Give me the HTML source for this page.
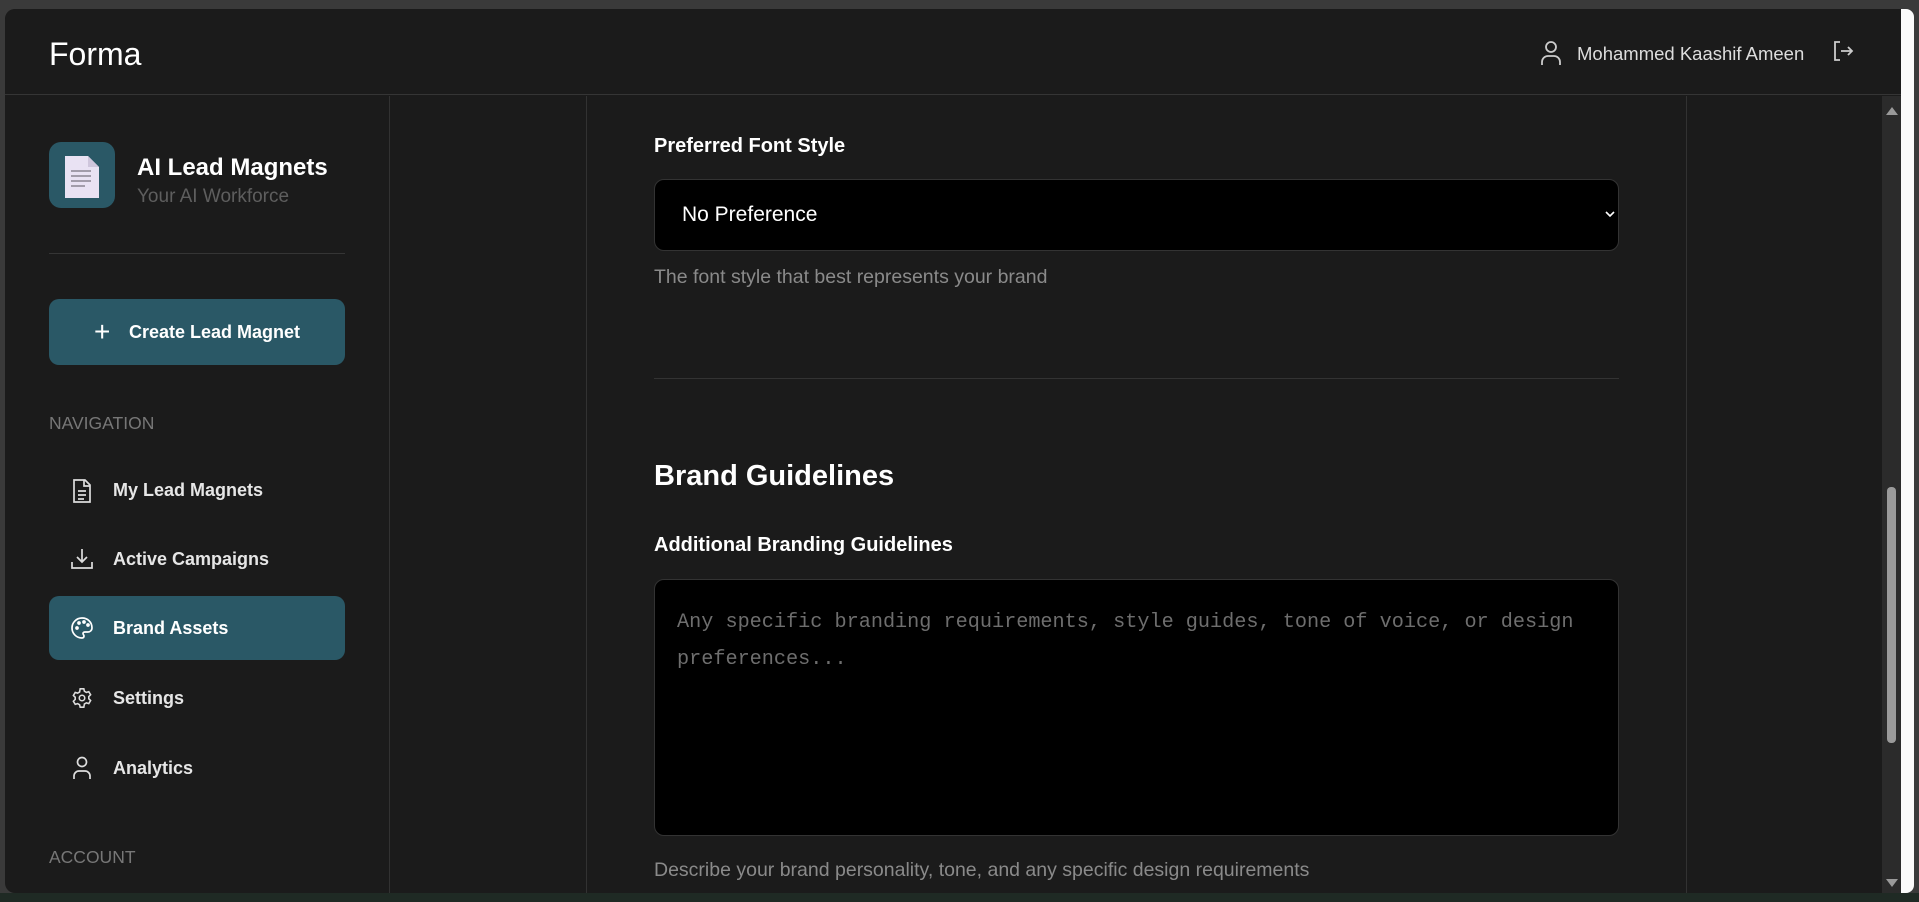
<!DOCTYPE html>
<html><head><meta charset="utf-8"><style>
*{box-sizing:border-box;margin:0;padding:0}
body{width:1919px;height:902px;background:#3a3a3a;overflow:hidden;font-family:"Liberation Sans",sans-serif;position:relative}
.win{position:absolute;left:5px;top:9px;width:1896px;height:884px;background:#1b1b1b;border-radius:10px 0 0 10px;overflow:hidden}
.white{position:absolute;left:1901px;top:9px;width:13px;height:884px;background:#fafafa;border-radius:0 8px 8px 0}
.green{position:absolute;left:0;top:893px;width:1919px;height:9px;background:#1f2a24}
.hdr{position:absolute;left:0;top:0;width:1896px;height:86px;border-bottom:1px solid #353535;background:#1b1b1b}
.t{position:absolute;white-space:nowrap}
.vl{position:absolute;top:87px;width:1px;height:800px;background:#323232}
.sb{position:absolute;left:1877px;top:87px;width:19px;height:800px;background:#2b2b2b}
.thumb{position:absolute;left:1882px;top:478px;width:9px;height:256px;background:#9a9a9a;border-radius:4px}
.nav{position:absolute;left:44px;width:296px;height:64px;border-radius:10px}
.navt{position:absolute;left:108px;font-size:18px;font-weight:bold;color:#e6e6e6;white-space:nowrap}
.ic{position:absolute;left:66px}
</style></head><body>
<div class="win">
 <div class="hdr">
  <div class="t" style="left:44px;top:27px;font-size:32px;color:#fff">Forma</div>
  <svg class="t" style="left:1534px;top:31px" width="24" height="26" viewBox="0 0 24 26" fill="none" stroke="#ccc" stroke-width="1.8"><circle cx="12" cy="7" r="5"/><path d="M3 25v-3a6 6 0 0 1 6-6h6a6 6 0 0 1 6 6v3"/></svg>
  <div class="t" style="left:1572px;top:34px;font-size:18.5px;color:#ddd">Mohammed Kaashif Ameen</div>
  <svg class="t" style="left:1826px;top:30px" width="24" height="24" viewBox="0 0 24 24" fill="none" stroke="#ccc" stroke-width="1.8"><path d="M9 3H4v18h5M10 12h11M17 8l4 4-4 4"/></svg>
 </div>
 <div class="vl" style="left:384px"></div>
 <div class="vl" style="left:581px"></div>
 <div class="vl" style="left:1681px"></div>
 <div class="sb"></div>
 <svg class="t" style="left:1881px;top:96px" width="12" height="10"><path d="M0 10L6 2 12 10z" fill="#9a9a9a"/></svg>
 <svg class="t" style="left:1881px;top:870px" width="12" height="10"><path d="M0 0L6 8 12 0z" fill="#9a9a9a"/></svg>
 <div class="thumb"></div>

 <div class="t" style="left:44px;top:133px;width:66px;height:66px;background:#2a5866;border-radius:12px">
  <svg style="position:absolute;left:15px;top:13px" width="36" height="44" viewBox="0 0 36 44"><path d="M1 1h23l11 11v31H1z" fill="#e9e2f3"/><path d="M24 1v11h11" fill="#cfc6dc"/><path d="M7 16h20M7 21h20M7 26h20M7 31h14" stroke="#8a8591" stroke-width="1.5"/></svg>
 </div>
 <div class="t" style="left:132px;top:145px;font-size:24px;font-weight:bold;color:#fff">AI Lead Magnets</div>
 <div class="t" style="left:132px;top:177px;font-size:19px;color:#5e5e5e">Your AI Workforce</div>
 <div class="t" style="left:44px;top:244px;width:296px;height:1px;background:#353535"></div>
 <div class="t" style="left:44px;top:290px;width:296px;height:66px;background:#2a5866;border-radius:10px"></div>
 <div class="t" style="left:89px;top:307px;font-size:28px;color:#fff;font-weight:300">+</div>
 <div class="t" style="left:124px;top:313px;font-size:18px;font-weight:bold;color:#fff">Create Lead Magnet</div>
 <div class="t" style="left:44px;top:404px;font-size:17.5px;color:#777">NAVIGATION</div>

 <div class="nav" style="top:587px;background:#2a5866"></div>
 <svg class="ic" style="top:470px" width="22" height="24" viewBox="0 0 22 24" fill="none" stroke="#ddd" stroke-width="1.7"><path d="M3 1h11l5 5v17H3z"/><path d="M13 1v6h6M7 12h8M7 16h8M7 20h6"/></svg>
 <div class="navt" style="top:471px">My Lead Magnets</div>
 <svg class="ic" style="top:539px" width="22" height="22" viewBox="0 0 22 22" fill="none" stroke="#ddd" stroke-width="1.7"><path d="M1 14v6h20v-6M11 1v13M6 9l5 5 5-5"/></svg>
 <div class="navt" style="top:540px">Active Campaigns</div>
 <svg class="ic" style="top:608px" width="22" height="22" viewBox="0 0 22 22" fill="none" stroke="#fff" stroke-width="1.7"><path d="M11 1a10 10 0 1 0 0 20c1.5 0 2-1 2-2s-1-1.5-1-2.5 1-1.5 2-1.5h3a4 4 0 0 0 4-4C21 5 16.5 1 11 1z"/><circle cx="6" cy="11" r="1" fill="#fff"/><circle cx="8" cy="6" r="1" fill="#fff"/><circle cx="13" cy="5" r="1" fill="#fff"/><circle cx="17" cy="8" r="1" fill="#fff"/></svg>
 <div class="navt" style="top:609px;color:#fff">Brand Assets</div>
 <svg class="ic" style="top:678px" width="22" height="22" viewBox="0 0 24 24" fill="none" stroke="#ddd" stroke-width="1.7"><circle cx="12" cy="12" r="3"/><path d="M10 2h4l.6 2.6 2.2 1.3 2.6-.8 2 3.4-2 1.9v2.4l2 1.9-2 3.4-2.6-.8-2.2 1.3L14 22h-4l-.6-2.6-2.2-1.3-2.6.8-2-3.4 2-1.9V11.2l-2-1.9 2-3.4 2.6.8 2.2-1.3z"/></svg>
 <div class="navt" style="top:679px">Settings</div>
 <svg class="ic" style="top:747px" width="22" height="24" viewBox="0 0 22 24" fill="none" stroke="#ddd" stroke-width="1.7"><circle cx="11" cy="6" r="4.5"/><path d="M3 23v-3a5 5 0 0 1 5-5h6a5 5 0 0 1 5 5v3"/></svg>
 <div class="navt" style="top:749px">Analytics</div>
 <div class="t" style="left:44px;top:838px;font-size:17.5px;color:#777">ACCOUNT</div>

 <div class="t" style="left:649px;top:126px;font-size:20px;font-weight:bold;color:#fff">Preferred Font Style</div>
 <div class="t" style="left:649px;top:170px;width:965px;height:72px;background:#000;border:1px solid #333;border-radius:10px"></div>
 <div class="t" style="left:677px;top:194px;font-size:21px;color:#fff">No Preference</div>
 <svg class="t" style="left:1600px;top:202px" width="10" height="8"><path d="M1 1l4 4 4-4" fill="none" stroke="#fff" stroke-width="1.6"/></svg>
 <div class="t" style="left:649px;top:257px;font-size:19.5px;color:#8a8a8a">The font style that best represents your brand</div>
 <div class="t" style="left:649px;top:369px;width:965px;height:1px;background:#333"></div>
 <div class="t" style="left:649px;top:451px;font-size:29px;font-weight:bold;color:#fff">Brand Guidelines</div>
 <div class="t" style="left:649px;top:525px;font-size:20px;font-weight:bold;color:#fff">Additional Branding Guidelines</div>
 <div class="t" style="left:649px;top:570px;width:965px;height:257px;background:#000;border:1px solid #333;border-radius:10px"></div>
 <div class="t" style="left:672px;top:595px;font-family:'Liberation Mono',monospace;font-size:20.2px;line-height:37px;color:#6e6e6e">Any specific branding requirements, style guides, tone of voice, or design<br>preferences...</div>
 <div class="t" style="left:649px;top:850px;font-size:19.5px;color:#8a8a8a">Describe your brand personality, tone, and any specific design requirements</div>
</div>
<div class="white"></div>
<div class="green"></div>
</body></html>
